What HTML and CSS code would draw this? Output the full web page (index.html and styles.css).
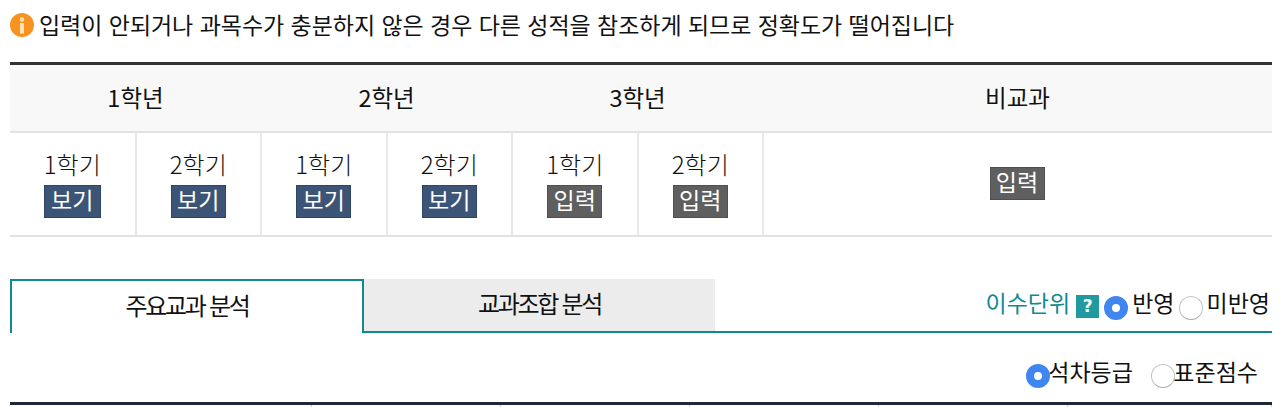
FILE: index.html
```html
<!DOCTYPE html>
<html lang="ko">
<head>
  <meta charset="UTF-8" />
  <title>성적 입력</title>
  <link rel="stylesheet" href="styles.css">
</head>
<body>

<div class="container">
  <!-- Notice -->
  <p class="notice">
    <svg class="notice-icon" width="24" height="24" viewBox="0 0 24 24">
      <circle cx="12" cy="12" r="12" fill="#f7931e"/>
      <circle cx="12" cy="6.5" r="2.2" fill="#ffe3b8"/>
      <rect x="10" y="10" width="4" height="10.5" fill="#ffe3b8"/>
    </svg>
    입력이 안되거나 과목수가 충분하지 않은 경우 다른 성적을 참조하게 되므로 정확도가 떨어집니다
  </p>

  <!-- Grades -->
  <table class="grades">
    <colgroup>
      <col class="term"><col class="term"><col class="term"><col class="term"><col class="term"><col class="term"><col>
    </colgroup>
    <tr class="head">
      <th colspan="2">1학년</th>
      <th colspan="2">2학년</th>
      <th colspan="2">3학년</th>
      <th>비교과</th>
    </tr>
    <tr>
      <td>1학기<a class="btn btn-view wide">보기</a></td>
      <td>2학기<a class="btn btn-view">보기</a></td>
      <td>1학기<a class="btn btn-view">보기</a></td>
      <td>2학기<a class="btn btn-view">보기</a></td>
      <td>1학기<a class="btn btn-input">입력</a></td>
      <td>2학기<a class="btn btn-input">입력</a></td>
      <td class="extra"><a class="btn btn-input">입력</a></td>
    </tr>
  </table>

  <!-- Tabs -->
  <div class="tabs">
    <div class="tab active">주요교과 분석</div>
    <div class="tab">교과조합 분석</div>
    <div class="credit">
      <span class="credit-label">이수단위</span>
      <span class="help">?</span>
      <span class="radio on"></span><span class="radio-text">반영</span>
      <span class="radio"></span><span class="radio-text-last">미반영</span>
    </div>
  </div>

  <!-- Score type -->
  <div class="score-type">
    <span class="radio on"></span><span class="score-first">석차등급</span>
    <span class="radio"></span><span>표준점수</span>
  </div>

  <div class="result-head">
    <span></span><span></span><span></span><span></span><span></span><span></span>
  </div>
</div>

</body>
</html>
```

FILE: styles.css
```css
html, body {
  height: 407px;
  overflow: hidden;
}

body {
  font-family: "Noto Sans CJK KR", "Noto Sans", sans-serif;
  font-weight: 300;
  background-color: #fff;
  color: #111;
  margin: 0;
}

.container {
  width: 1262px;
  margin-left: 10px;
}

.notice {
  display: flex;
  align-items: center;
  gap: 5px;
  height: 50px;
  margin: 0 0 12px;
  padding-bottom: 2px;
  box-sizing: border-box;
  font-size: 23px;
  font-weight: 400;
  letter-spacing: -0.04px;
  white-space: nowrap;
}

.notice-icon {
  flex: none;
  margin-top: 2px;
}

.grades {
  width: 100%;
  table-layout: fixed;
  border-collapse: collapse;
  border-top: 3px solid #333;
  font-size: 24px;
}

.term {
  width: 125.5px;
}

.grades th {
  height: 64px;
  padding: 0 0 2px;
  background-color: #f8f8f8;
  border-bottom: 2px solid #e2e2e2;
  font-weight: 400;
  font-size: 23.5px;
}

.grades td {
  height: 102px;
  padding: 0;
  text-align: center;
  line-height: 26px;
  border-bottom: 2px solid #e2e2e2;
  border-right: 2px solid #e8e8e8;
}

.grades td:last-child {
  border-right: none;
}

.btn {
  display: block;
  width: 55px;
  height: 33px;
  margin: 8px auto 0;
  box-sizing: border-box;
  color: #fff;
  font-size: 23px;
  font-weight: 400;
  line-height: 27px;
}

.wide {
  width: 57px;
}

.btn-view {
  background-color: #3c5476;
  border: 1px solid #2f4566;
}

.btn-input {
  background-color: #5f5f5f;
  border: 1px solid #505050;
}

.extra .btn {
  margin: 0 auto 1px;
  position: relative;
  left: -1px;
}

.tabs {
  display: flex;
  align-items: stretch;
  height: 54px;
  margin-top: 42px;
}

.tab {
  width: 351px;
  padding-bottom: 6px;
  box-sizing: border-box;
  display: flex;
  align-items: center;
  justify-content: center;
  background-color: #ececec;
  border-bottom: 2px solid #0f8a90;
  font-size: 24px;
  font-weight: 400;
  letter-spacing: -2.3px;
}

.tab.active {
  width: 354px;
  background-color: #fff;
  border: 2px solid #0f8a90;
  border-bottom: none;
}

.credit {
  flex: 1;
  display: flex;
  align-items: center;
  justify-content: flex-end;
  padding: 0 2px 6px 0;
  font-size: 23px;
  font-weight: 400;
  border-bottom: 2px solid #0f8a90;
}

.credit .radio {
  margin-top: 12px;
}

.credit-label {
  color: #0f8a90;
  margin-right: 6px;
}

.help {
  width: 23px;
  height: 23px;
  margin: 9px 5px 0 0;
  background-color: #1f9aa0;
  color: #fff;
  font-family: "DejaVu Sans", sans-serif;
  font-size: 17px;
  font-weight: bold;
  line-height: 23px;
  text-align: center;
}

.radio {
  flex: none;
  display: inline-block;
  width: 24px;
  height: 24px;
  box-sizing: border-box;
  border-radius: 50%;
  background-color: #fff;
  border: 1px solid #c4c4c4;
  border-bottom-color: #aaa;
}

.radio.on {
  border: 8px solid #3f86f0;
}

.radio-text {
  margin: 0 4px 0 4px;
}

.radio-text-last {
  margin-left: 4px;
}

.score-type {
  display: flex;
  align-items: center;
  justify-content: flex-end;
  height: 69px;
  padding: 6px 14px 0 0;
  box-sizing: border-box;
  font-size: 23px;
  font-weight: 400;
}

.score-type .radio {
  margin: 11px -2px 0 0;
}

.score-first {
  margin-right: 18.5px;
}

.result-head {
  display: grid;
  grid-template-columns: 302px 189px 189px 189px 189px 1fr;
  height: 5px;
  border-top: 3px solid #1d2838;
}

.result-head span {
  border-right: 1px solid #ccc;
}
```
